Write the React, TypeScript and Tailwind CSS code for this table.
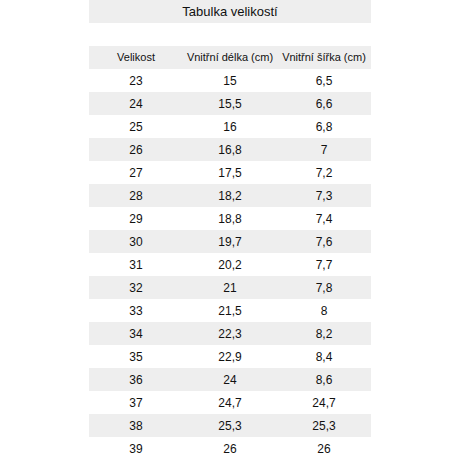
const rows: [string, string, string][] = [
  ["23", "15", "6,5"],
  ["24", "15,5", "6,6"],
  ["25", "16", "6,8"],
  ["26", "16,8", "7"],
  ["27", "17,5", "7,2"],
  ["28", "18,2", "7,3"],
  ["29", "18,8", "7,4"],
  ["30", "19,7", "7,6"],
  ["31", "20,2", "7,7"],
  ["32", "21", "7,8"],
  ["33", "21,5", "8"],
  ["34", "22,3", "8,2"],
  ["35", "22,9", "8,4"],
  ["36", "24", "8,6"],
  ["37", "24,7", "24,7"],
  ["38", "25,3", "25,3"],
  ["39", "26", "26"],
];

export default function App() {
  return (
    <div className="flex h-[460px] w-[460px] justify-center bg-white font-['Liberation_Sans',Arial,sans-serif] text-[#111]">
      <div className="flex w-[282px] flex-col">
        <div className="flex h-[23px] items-center justify-center bg-[#eeeeee] text-[13px]">
          Tabulka velikostí
        </div>
        <div className="h-[23px]" />
        <div className="grid h-[23px] grid-cols-3 items-center bg-[#eeeeee] text-center text-[11px]">
          <span>Velikost</span>
          <span>Vnitřní délka (cm)</span>
          <span>Vnitřní šířka (cm)</span>
        </div>
        {rows.map((r, i) => (
          <div
            key={r[0]}
            className={`grid h-[23px] grid-cols-3 items-center text-center text-[12px] ${i % 2 === 1 ? "bg-[#eeeeee]" : "bg-white"}`}
          >
            <span>{r[0]}</span>
            <span>{r[1]}</span>
            <span>{r[2]}</span>
          </div>
        ))}
      </div>
    </div>
  );
}
